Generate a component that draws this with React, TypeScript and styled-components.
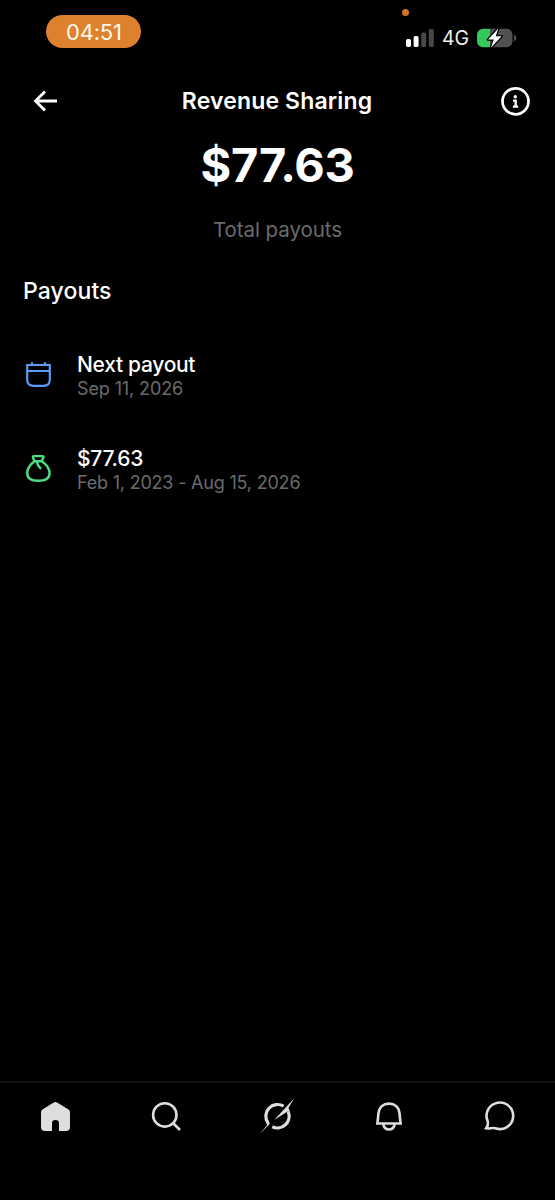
import React from "react";
import styled, { createGlobalStyle } from "styled-components";

const GlobalStyle = createGlobalStyle`
  * { box-sizing: border-box; }
  body { margin: 0; background: #000; }
  h1, h2 { margin: 0; }
`;

const Screen = styled.div`
  width: 555px;
  height: 1200px;
  display: flex;
  flex-direction: column;
  background: #000;
  color: #fff;
  font-family: Inter, "Liberation Sans", sans-serif;
  overflow: hidden;
`;

const StatusBar = styled.div`
  height: 76px;
  display: flex;
  justify-content: space-between;
  align-items: flex-start;
  padding: 0 38px 0 46.4px;
`;

const TimePill = styled.div`
  margin-top: 15px;
  width: 95px;
  height: 33px;
  border-radius: 17px;
  background: #de812f;
  display: flex;
  align-items: center;
  justify-content: center;
  font-size: 22px;
  font-weight: 400;
  letter-spacing: -0.2px;
  color: #fff6ea;
`;

const StatusIcons = styled.div`
  position: relative;
  margin-top: 26px;
  height: 23px;
  display: flex;
  align-items: center;
`;

const RecordingDot = styled.span`
  position: absolute;
  left: -4px;
  top: -17px;
  width: 7px;
  height: 7px;
  border-radius: 50%;
  background: #d0762b;
`;

const Network = styled.span`
  width: 27px;
  margin: 1px 8px 0;
  font-size: 19.5px;
  line-height: 23px;
  letter-spacing: -0.1px;
  color: #eee;
`;

const Header = styled.header`
  height: 50px;
  display: grid;
  grid-template-columns: 30px 1fr 31px;
  align-items: center;
  justify-items: center;
  padding: 0 24px 0 30px;
`;

const Title = styled.h1`
  margin-right: 6px;
  font-size: 23px;
  line-height: 30px;
  font-weight: 600;
  letter-spacing: 0.15px;
  white-space: nowrap;
`;

const Text = styled.div<{ $size: number; $line: number; $weight?: number; $track?: number; $muted?: boolean }>`
  font-size: ${(p) => p.$size}px;
  line-height: ${(p) => p.$line}px;
  font-weight: ${(p) => p.$weight ?? 400};
  letter-spacing: ${(p) => p.$track ?? 0}px;
  color: ${(p) => (p.$muted ? "#6b6b6d" : "#fff")};
  white-space: nowrap;
`;

const Summary = styled.section`
  display: flex;
  flex-direction: column;
  align-items: center;
  padding-top: 12px;
  gap: 25px;
`;

const Payouts = styled.section`
  flex: 1;
  padding: 33px 23px 0;
`;

const PayoutList = styled.div`
  margin-top: 45px;
  display: flex;
  flex-direction: column;
  gap: 44px;
`;

const Row = styled.div`
  height: 50px;
  display: flex;
  align-items: center;
  gap: 23px;
`;

const RowText = styled.div`
  display: flex;
  flex-direction: column;
`;

const TabBar = styled.nav`
  height: 119px;
  border-top: 2px solid #131313;
  display: grid;
  grid-template-columns: repeat(5, 1fr);
  justify-items: center;
  align-items: start;
  padding-top: 17px;
`;

const Icon = styled.svg`
  display: block;
  flex: none;
  overflow: visible;
`;

const RowIcon = styled(Icon)`
  margin-bottom: 3px;
`;

const tabProps = { width: 33, height: 33, viewBox: "0 0 33 33", fill: "none", stroke: "#dedede", strokeWidth: 2.6 };

export default function App() {
  return (
    <>
      <GlobalStyle />
      <Screen>
        <StatusBar>
          <TimePill>04:51</TimePill>
          <StatusIcons>
            <RecordingDot />
            <Icon width="28" height="20" viewBox="0 0 28 20">
              <rect x="0" y="11" width="5" height="8" rx="1.7" fill="#fff" />
              <rect x="7.6" y="8" width="5" height="11" rx="1.7" fill="#fff" />
              <rect x="15.2" y="4.5" width="5" height="14.5" rx="1.7" fill="#48484a" />
              <rect x="22.8" y="1" width="5" height="18" rx="1.7" fill="#48484a" />
            </Icon>
            <Network>4G</Network>
            <Icon width="40" height="20" viewBox="0 0 40 20">
              <path d="M6 .7H13V19.3H6A6 6 0 0 1 0 13.300V6.700A6 6 0 0 1 6 .7Z" fill="#34c759" />
              <path d="M13 .7H29.500A6 6 0 0 1 35.500 6.700V13.300A6 6 0 0 1 29.500 19.300H13Z" fill="#515153" />
              <path d="M37 6.700Q39.500 7.500 39.500 10T37 13.300Z" fill="#515153" />
              <path d="M21.300 .5L11 11.600H16.800L13.900 19.700L24.600 8.300H18.700Z" fill="#fff" stroke="#000" strokeWidth="2.6" paintOrder="stroke" strokeLinejoin="round" />
            </Icon>
          </StatusIcons>
        </StatusBar>

        <Header>
          <Icon width="30" height="30" viewBox="0 0 30 30" fill="none" stroke="#fff" strokeWidth="2.8">
            <path d="M27 15H5.500M15 5.500L5.500 15L15 24.500" />
          </Icon>
          <Title>Revenue Sharing</Title>
          <Icon width="31" height="31" viewBox="0 0 31 31" fill="none" stroke="#fff">
            <circle cx="15.500" cy="15.300" r="13" strokeWidth="2.7" />
            <circle cx="15.300" cy="10.700" r="1.700" fill="#fff" stroke="none" />
            <path d="M13 14.700H15.700V20.700M12.900 20.700H18.200" strokeWidth="2.300" />
          </Icon>
        </Header>

        <Summary>
          <Text $size={47} $line={54} $weight={650} $track={-0.3}>$77.63</Text>
          <Text $size={20.5} $line={26} $track={-0.05} $muted>Total payouts</Text>
        </Summary>

        <Payouts>
          <Text as="h2" $size={23} $line={30} $weight={500} $track={0.1}>Payouts</Text>
          <PayoutList>
            <Row>
              <RowIcon width="31" height="31" viewBox="0 0 31 31" fill="none" stroke="#5a9cf5" strokeWidth="2.200">
                <path d="M4.200 6H26.800V20.500Q26.800 26.800 20.500 26.800H10.500Q4.200 26.800 4.200 20.500ZM4.200 12H26.800M9 3.200V6M22 3.200V6" />
              </RowIcon>
              <RowText>
                <Text $size={21} $line={25} $weight={500} $track={-0.3}>Next payout</Text>
                <Text $size={18} $line={24} $track={-0.12} $muted>Sep 11, 2026</Text>
              </RowText>
            </Row>
            <Row>
              <RowIcon width="31" height="31" viewBox="0 0 31 31" fill="none" stroke="#4ade80" strokeWidth="2.400" strokeLinejoin="round">
                <path d="M11.500 8.200L10 4.700Q9.500 3.100 11.200 3.100H19.200Q21 3.100 20.300 4.700L18.700 8.200ZM11.500 8.200C7 11.500 4.200 15.500 4.200 20C4.200 25.500 9 27.800 15.300 27.800S26.600 25.500 26.600 20C26.600 15.500 23.500 11.500 18.700 8.200M14 8.700Q14.500 13.500 18.300 15.700" />
              </RowIcon>
              <RowText>
                <Text $size={21} $line={25} $weight={500} $track={-0.25}>$77.63</Text>
                <Text $size={18} $line={24} $track={-0.2} $muted>Feb 1, 2023 - Aug 15, 2026</Text>
              </RowText>
            </Row>
          </PayoutList>
        </Payouts>

        <TabBar>
          <Icon {...tabProps}>
            <path d="M14.700 2.500Q16.400 1.400 18.100 2.500L29.200 9.300Q31 10.400 31 12.500V27Q31 31 27 31H20V23.200Q20 20 16.500 20T13 23.200V31H6Q2 31 2 27V12.500Q2 10.400 3.800 9.300Z" fill="#dedede" stroke="none" />
          </Icon>
          <Icon {...tabProps}>
            <circle cx="14.800" cy="14.900" r="11.700" />
            <path d="M23 23L30 30" />
          </Icon>
          <Icon {...tabProps}>
            <path d="M22.600 6.200A11.700 11.700 0 0 0 7 23M27.100 11.400A11.700 11.700 0 0 1 11.300 26.700" strokeWidth="3.200" />
            <path d="M5.300 22L6.300 25L-1.700 34.300L8.800 24L7.500 21ZM33 -1.500L13.200 20L25.700 12L28.600 10.700L27.500 8Z" fill="#dedede" stroke="none" />
          </Icon>
          <Icon {...tabProps}>
            <path d="M5.400 23.500L6.500 13.500C7 7 11.300 3.600 17 3.600S27 7 27.500 13.500L28.600 23.500Z" />
            <path d="M11.300 24Q12 29.500 17 29.500T22.600 24" />
          </Icon>
          <Icon {...tabProps}>
            <path d="M3.200 28.300C4.700 26.500 5.300 24.300 4.700 21.200A13.300 13.300 0 1 1 12.300 28.300C9 27.400 6.500 29 3.200 28.300Z" />
          </Icon>
        </TabBar>
      </Screen>
    </>
  );
}
